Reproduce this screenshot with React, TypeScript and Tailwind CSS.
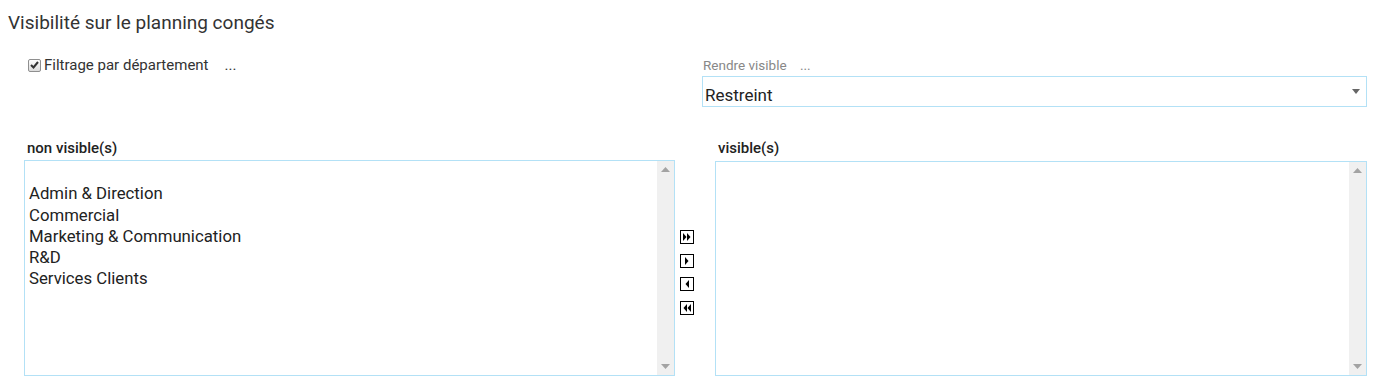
import React from "react";

const font = { fontFamily: "Roboto, 'Noto Sans', sans-serif" };

function ScrollTrack() {
  return (
    <div className="w-[17px] bg-[#f0f0f0] flex flex-col justify-between items-center py-[6px]">
      <svg width="9" height="5" viewBox="0 0 9 5"><path d="M0 5 L4.5 0 L9 5 Z" fill="#a3a3a3" /></svg>
      <svg width="9" height="5" viewBox="0 0 9 5"><path d="M0 0 L4.5 5 L9 0 Z" fill="#a3a3a3" /></svg>
    </div>
  );
}

function MoveBtn({ kind }: { kind: "allR" | "r" | "l" | "allL" }) {
  const shapes: Record<string, string> = {
    allR: "M3 3 L6.5 7 L3 11 Z M7 3 L10.5 7 L7 11 Z",
    r: "M5 3 L8.5 7 L5 11 Z",
    l: "M9 3 L5.5 7 L9 11 Z",
    allL: "M7 3 L3.5 7 L7 11 Z M11 3 L7.5 7 L11 11 Z",
  };
  return (
    <button className="w-[14px] h-[14px] p-0 block">
      <svg width="14" height="14" viewBox="0 0 14 14">
        <rect x="0.5" y="0.5" width="13" height="13" fill="#fff" stroke="#000" />
        <path d={shapes[kind]} fill="#000" />
      </svg>
    </button>
  );
}

export default function App() {
  const items = ["", "Admin & Direction", "Commercial", "Marketing & Communication", "R&D", "Services Clients"];
  return (
    <div className="w-[1379px] h-[388px] bg-white text-[#333]" style={font}>
      <h2 className="pl-2 pt-[10px] text-[19px] leading-[26px] text-[#333]">Visibilité sur le planning congés</h2>

      <div className="flex pl-6 mt-[17px]">
        <div className="w-[678px] flex items-start pt-[3px]">
          <label className="flex items-center ml-[4px] text-[15px] leading-[18px] text-[#333]">
            <span className="w-[13px] h-[13px] border border-[#8f8f8f] rounded-[2px] bg-gradient-to-b from-[#fdfdfd] to-[#dcdcdc] flex items-center justify-center mr-[3px]">
              <svg width="9" height="8" viewBox="0 0 9 8"><path d="M1 4 L3.5 6.5 L8 1" fill="none" stroke="#333" strokeWidth="2" /></svg>
            </span>
            Filtrage par département
          </label>
          <span className="ml-[16px] text-[15px] leading-[18px] text-[#333]">...</span>
        </div>
        <div className="w-[665px] flex flex-col">
          <div className="text-[13.5px] leading-[16px] text-[#888] pl-px mt-[4px]">
            Rendre visible <span className="ml-[10px]">...</span>
          </div>
          <div className="mt-[3px] h-[31px] border border-[#b3e1f6] flex items-center justify-between pl-[2px] pr-[6px]">
            <span className="text-[17px] leading-[20px] text-[#222] pt-[6px]">Restreint</span>
            <svg width="8" height="5" viewBox="0 0 8 5"><path d="M0 0 L4 5 L8 0 Z" fill="#666" /></svg>
          </div>
        </div>
      </div>

      <div className="flex pl-6 mt-[32px]">
        <div className="w-[651px] flex flex-col">
          <div className="text-[15px] leading-[18px] font-medium text-[#222] pl-[3px]">non visible(s)</div>
          <div className="mt-[3px] h-[216px] border border-[#b3e1f6] flex">
            <div className="flex-1 pt-[1px] pl-[4px]">
              {items.map((t, i) => (
                <div key={i} className="h-[21.25px] text-[16.75px] leading-[21px] text-[#222]">{t}</div>
              ))}
            </div>
            <ScrollTrack />
          </div>
        </div>
        <div className="w-[40px] flex flex-col items-start gap-[9.67px] pt-[91px] pl-[5px]">
          <MoveBtn kind="allR" />
          <MoveBtn kind="r" />
          <MoveBtn kind="l" />
          <MoveBtn kind="allL" />
        </div>
        <div className="w-[652px] flex flex-col">
          <div className="text-[15px] leading-[18px] font-medium text-[#222] pl-[3px]">visible(s)</div>
          <div className="mt-[4px] h-[215px] border border-[#b3e1f6] flex">
            <div className="flex-1" />
            <ScrollTrack />
          </div>
        </div>
      </div>
    </div>
  );
}
